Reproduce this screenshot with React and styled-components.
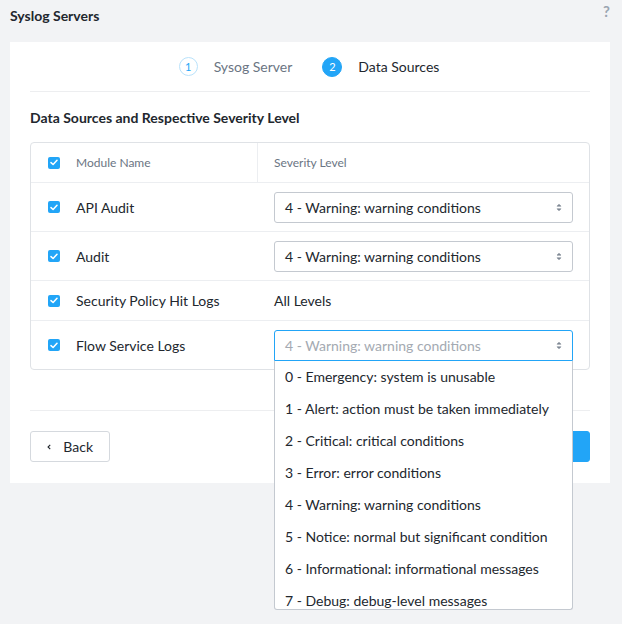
import React from 'react';
import styled, { createGlobalStyle } from 'styled-components';

const GlobalStyle = createGlobalStyle`
  html, body {
    margin: 0;
    padding: 0;
    background: #f2f3f5;
    font-family: Lato, "Open Sans", sans-serif;
    color: #2b3038;
  }
`;

const Page = styled.div`
  width: 622px;
  height: 624px;
  overflow: hidden;
  padding: 0 12px 0 10px;
  box-sizing: border-box;
`;

const TopBar = styled.div`
  display: flex;
  align-items: center;
  justify-content: space-between;
  margin-top: -12px;
  height: 54px;
`;

const Title = styled.h1`
  margin: 0;
  font-size: 14px;
  font-weight: 700;
  color: #22272e;
`;

const Help = styled.span`
  font-size: 15px;
  font-weight: 700;
  color: #9aa5b1;
  margin-right: 0;
  margin-top: -8px;
`;

const Card = styled.div`
  background: #fff;
  padding: 0 20px 21px;
  height: 441px;
  box-sizing: border-box;
`;

const Stepper = styled.div`
  height: 49px;
  display: flex;
  align-items: center;
  justify-content: center;
  gap: 30px;
  border-bottom: 1px solid #edeef0;
  padding-right: 2px;
`;

const Step = styled.div`
  display: flex;
  align-items: center;
  gap: 16px;
  font-size: 14px;
  color: ${p => (p.$active ? '#22272e' : '#6b7583')};
`;

const StepNum = styled.span`
  width: ${p => (p.$active ? 20 : 19)}px;
  height: ${p => (p.$active ? 20 : 19)}px;
  border-radius: 50%;
  display: flex;
  align-items: center;
  justify-content: center;
  font-size: 11px;
  box-sizing: border-box;
  border: 1px solid ${p => (p.$active ? '#22a5f7' : '#b9e2fb')};
  background: ${p => (p.$active ? '#22a5f7' : '#fff')};
  color: ${p => (p.$active ? '#fff' : '#22a5f7')};
`;

const Heading = styled.h2`
  margin: 17px 0 16px;
  font-size: 14px;
  font-weight: 700;
  color: #22272e;
`;

const Table = styled.div`
  border: 1px solid #dfe2e6;
  border-radius: 4px;
`;

const Row = styled.div`
  display: grid;
  grid-template-columns: 227px 1fr;
  align-items: center;
  height: ${p => p.$h}px;
  border-top: ${p => (p.$first ? 'none' : '1px solid #eceef1')};
  box-sizing: border-box;
`;

const NameCell = styled.div`
  display: flex;
  align-items: center;
  gap: 16px;
  padding-left: 17px;
  height: 100%;
  font-size: ${p => (p.$head ? '12px' : '14px')};
  color: ${p => (p.$head ? '#6b7583' : '#22272e')};
  border-right: ${p => (p.$head ? '1px solid #eceef1' : 'none')};
`;

const LevelCell = styled.div`
  padding-left: 16px;
  padding-right: 16px;
  font-size: ${p => (p.$head ? '12px' : '14px')};
  color: ${p => (p.$head ? '#6b7583' : '#22272e')};
  position: relative;
`;

const Check = styled.span`
  width: 12px;
  height: 12px;
  border-radius: 2px;
  background: #22a5f7;
  display: flex;
  align-items: center;
  justify-content: center;
  flex-shrink: 0;
`;

const Select = styled.div`
  height: 31px;
  box-sizing: border-box;
  border: 1px solid ${p => (p.$open ? '#22a5f7' : '#c4c9d0')};
  border-radius: ${p => (p.$open ? '3px 3px 0 0' : '3px')};
  display: flex;
  align-items: center;
  justify-content: space-between;
  padding: 0 10px;
  font-size: 14px;
  color: ${p => (p.$open ? '#a4aab2' : '#22272e')};
`;

const Menu = styled.ul`
  position: absolute;
  left: 16px;
  right: 16px;
  top: 31px;
  margin: 0;
  padding: 0;
  list-style: none;
  background: #fff;
  border: 1px solid #c4c9d0;
  border-top: none;
  border-radius: 0 0 3px 3px;
  height: 249px;
  overflow: hidden;
  box-sizing: border-box;
  z-index: 5;
`;

const MenuItem = styled.li`
  height: 32px;
  display: flex;
  align-items: center;
  padding-left: 10px;
  font-size: 14px;
  color: #22272e;
`;

const Footer = styled.div`
  margin-top: 40px;
  border-top: 1px solid #edeef0;
  padding-top: 20px;
  display: flex;
  justify-content: space-between;
`;

const Button = styled.button`
  height: 31px;
  box-sizing: border-box;
  border-radius: 3px;
  font-family: inherit;
  font-size: 14px;
  display: flex;
  align-items: center;
  gap: 12px;
  padding: 0 16px;
  border: 1px solid ${p => (p.$primary ? '#22a5f7' : '#d5d9de')};
  background: ${p => (p.$primary ? '#22a5f7' : '#fff')};
  color: ${p => (p.$primary ? '#fff' : '#22272e')};
  width: ${p => p.$w}px;
`;

const CheckIcon = () => (
  <svg width="8" height="7" viewBox="0 0 8 7">
    <path d="M1 3.6 L3.1 5.5 L7 1.2" fill="none" stroke="#fff" strokeWidth="1.5" strokeLinecap="round" strokeLinejoin="round" />
  </svg>
);

const Arrows = () => (
  <svg width="6" height="9" viewBox="0 0 6 9">
    <path d="M1 3.2 L3 1.2 L5 3.2 Z M1 5.8 L3 7.8 L5 5.8 Z" fill="#7d8793" stroke="#7d8793" strokeWidth="0.6" strokeLinejoin="round" />
  </svg>
);

const levels = [
  '0 - Emergency: system is unusable',
  '1 - Alert: action must be taken immediately',
  '2 - Critical: critical conditions',
  '3 - Error: error conditions',
  '4 - Warning: warning conditions',
  '5 - Notice: normal but significant condition',
  '6 - Informational: informational messages',
  '7 - Debug: debug-level messages',
];

const rows = [
  { name: 'API Audit', kind: 'select' },
  { name: 'Audit', kind: 'select' },
  { name: 'Security Policy Hit Logs', kind: 'all' },
  { name: 'Flow Service Logs', kind: 'open' },
];

export default function App() {
  return (
    <>
      <GlobalStyle />
      <Page>
        <TopBar>
          <Title>Syslog Servers</Title>
          <Help>?</Help>
        </TopBar>
        <Card>
          <Stepper>
            <Step><StepNum>1</StepNum>Sysog Server</Step>
            <Step $active><StepNum $active>2</StepNum>Data Sources</Step>
          </Stepper>
          <Heading>Data Sources and Respective Severity Level</Heading>
          <Table>
            <Row $h={39} $first>
              <NameCell $head><Check><CheckIcon /></Check>Module Name</NameCell>
              <LevelCell $head>Severity Level</LevelCell>
            </Row>
            {rows.map(r => (
              <Row key={r.name} $h={r.kind === 'all' ? 40 : 49}>
                <NameCell><Check><CheckIcon /></Check>{r.name}</NameCell>
                <LevelCell>
                  {r.kind === 'all' ? (
                    'All Levels'
                  ) : (
                    <Select $open={r.kind === 'open'}>
                      4 - Warning: warning conditions
                      <Arrows />
                    </Select>
                  )}
                  {r.kind === 'open' && (
                    <Menu>
                      {levels.map(l => <MenuItem key={l}>{l}</MenuItem>)}
                    </Menu>
                  )}
                </LevelCell>
              </Row>
            ))}
          </Table>
          <Footer>
            <Button $w={80}>
              <svg width="6" height="8" viewBox="0 0 6 8">
                <path d="M4.5 1 L1.5 4 L4.5 7" fill="none" stroke="#22272e" strokeWidth="1.6" />
              </svg>
              Back
            </Button>
            <Button $primary $w={90}>Save</Button>
          </Footer>
        </Card>
      </Page>
    </>
  );
}
